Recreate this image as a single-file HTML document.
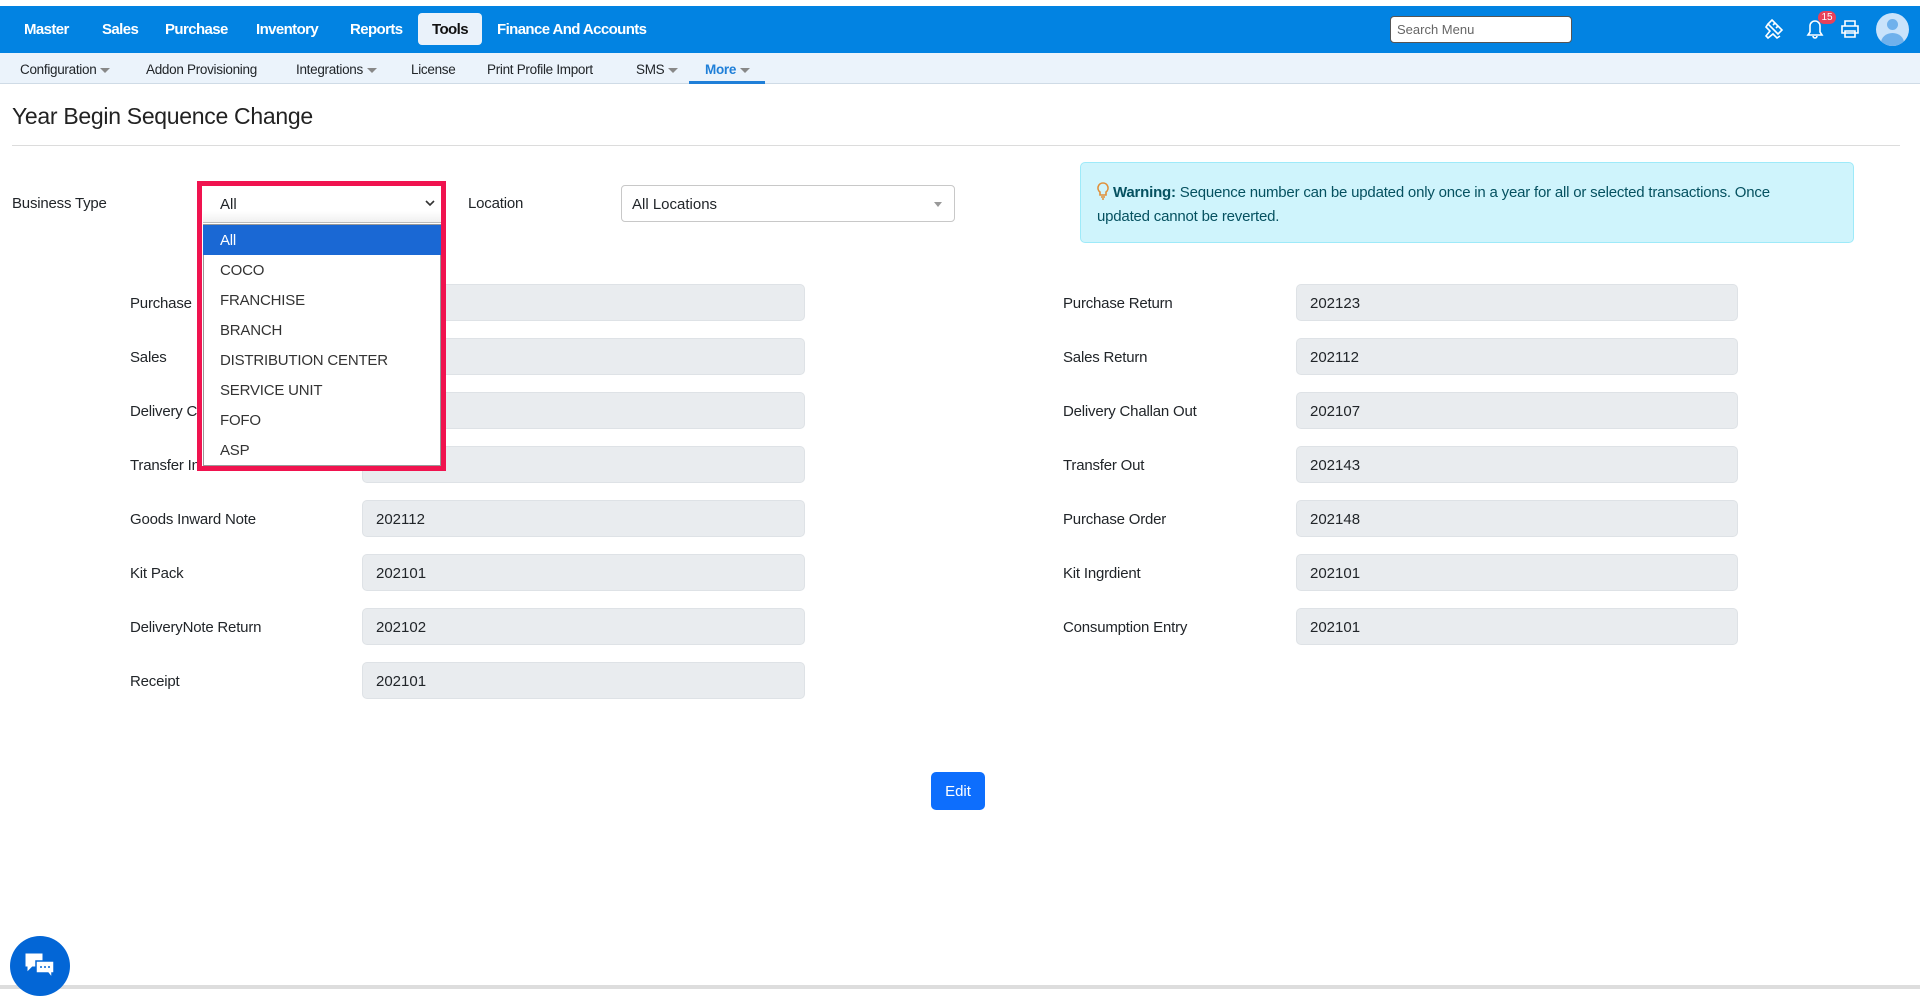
<!DOCTYPE html>
<html><head><meta charset="utf-8"><style>
*{box-sizing:border-box;margin:0;padding:0}
body{width:1920px;height:989px;position:relative;background:#fff;font-family:"Liberation Sans",sans-serif;color:#212529;overflow:hidden}
.a{position:absolute}
.top{left:0;top:6px;width:1920px;height:47px;background:#0283e2}
.nav{top:6px;height:47px;line-height:47px;color:#fff;font-weight:bold;font-size:15px;letter-spacing:-0.6px}
.tools{left:418px;top:13px;width:64px;height:32px;background:#eaf2fa;border-radius:4px;color:#111;line-height:34px;text-align:center;font-weight:bold;font-size:15px;letter-spacing:-0.6px}
.sub{left:0;top:53px;width:1920px;height:31px;background:#ebf3fb;border-bottom:1px solid #cfdbe6}
.si{top:54px;height:31px;line-height:31px;font-size:13.5px;color:#212529;letter-spacing:-0.3px}
.car{display:inline-block;width:0;height:0;border-left:5px solid transparent;border-right:5px solid transparent;border-top:5px solid #888;margin-left:4px;vertical-align:middle}
.lbl{font-size:15px;line-height:20px;letter-spacing:-0.2px}
.inp{background:#e9ecef;border:1px solid #dee2e6;border-radius:5px;height:37px;font-size:15px;line-height:37px;padding-left:13px}
.opt{left:203px;width:238px;height:30px;line-height:31px;padding-left:17px;font-size:15px;color:#333;letter-spacing:-0.2px}
</style></head><body>
<div class="a top"></div>
<div class="a nav" style="left:24px">Master</div>
<div class="a nav" style="left:102px">Sales</div>
<div class="a nav" style="left:165px">Purchase</div>
<div class="a nav" style="left:256px">Inventory</div>
<div class="a nav" style="left:350px">Reports</div>
<div class="a tools">Tools</div>
<div class="a nav" style="left:497px">Finance And Accounts</div>
<div class="a" style="left:1390px;top:16px;width:182px;height:27px;background:#fff;border:1px solid #555;border-radius:4px;font-size:13px;line-height:25px;padding-left:6px;color:#666">Search Menu</div>
<svg class="a" style="left:1760px;top:16px" width="26" height="26" viewBox="0 0 26 26" fill="none" stroke="#fff" stroke-width="1.6"><path d="M12 4l10 10-4 4-10-10z M8 8l-2 3 4 4-4 5 2 2 5-4 4 4 3-2"/><path d="M15 7l-2 2M18 10l-2 2"/></svg>
<svg class="a" style="left:1802px;top:14px" width="26" height="28" viewBox="0 0 26 28" fill="none" stroke="#fff" stroke-width="1.6"><path d="M6 21h14l-2-3v-6a5 5 0 0 0-10 0v6z M11 22a2 2 0 0 0 4 0"/></svg>
<div class="a" style="left:1818px;top:11px;width:18px;height:13px;background:#e8415a;border-radius:7px;color:#fff;font-size:10px;line-height:13px;text-align:center">15</div>
<svg class="a" style="left:1839px;top:18px" width="22" height="22" viewBox="0 0 22 22" fill="none" stroke="#fff" stroke-width="1.6"><path d="M6 8V3h10v5 M3 8h16v7H3z M6 13h10v6H6z"/></svg>
<div class="a" style="left:1876px;top:13px;width:33px;height:33px;border-radius:50%;background:#c9e3fb;overflow:hidden"><div class="a" style="left:11px;top:6px;width:11px;height:11px;border-radius:50%;background:#6fb1ec"></div><div class="a" style="left:5px;top:20px;width:23px;height:20px;border-radius:50%;background:#6fb1ec"></div></div>

<div class="a sub"></div>
<div class="a si" style="left:20px">Configuration<span class="car"></span></div>
<div class="a si" style="left:146px">Addon Provisioning</div>
<div class="a si" style="left:296px">Integrations<span class="car"></span></div>
<div class="a si" style="left:411px">License</div>
<div class="a si" style="left:487px">Print Profile Import</div>
<div class="a si" style="left:636px">SMS<span class="car"></span></div>
<div class="a si" style="left:705px;color:#1f7fd8;font-weight:bold">More<span class="car"></span></div>
<div class="a" style="left:689px;top:81px;width:76px;height:3px;background:#1f7fd8"></div>

<div class="a" style="left:12px;top:103px;font-size:23px;color:#222;letter-spacing:-0.3px">Year Begin Sequence Change</div>
<div class="a" style="left:12px;top:145px;width:1888px;height:1px;background:#dcdcdc"></div>

<div class="a lbl" style="left:12px;top:194px">Business Type</div>
<div class="a lbl" style="left:468px;top:194px">Location</div>
<div class="a" style="left:621px;top:185px;width:334px;height:37px;border:1px solid #c8c8c8;border-radius:4px;font-size:15px;line-height:37px;padding-left:10px">All Locations<span class="a" style="right:12px;top:16px;border-left:4px solid transparent;border-right:4px solid transparent;border-top:5px solid #999"></span></div>

<div class="a" style="left:1080px;top:162px;width:774px;height:81px;background:#cff4fc;border:1px solid #9eeaf9;border-radius:5px;color:#055160;font-size:15px;line-height:24px;padding:18px 0 0 16px;letter-spacing:-0.2px">
<svg width="12" height="18" viewBox="0 0 12 18" style="vertical-align:-3px" fill="none" stroke="#e0903a" stroke-width="1.6"><path d="M6 1a5 5 0 0 0-3 9v3h6v-3a5 5 0 0 0-3-9z M4 15h4 M5 17h2"/></svg> <b>Warning:</b> Sequence number can be updated only once in a year for all or selected transactions. Once<br>updated cannot be reverted.</div>

<div class="a lbl" style="left:130px;top:294px">Purchase</div>
<div class="a inp" style="left:362px;top:284px;width:443px"></div>
<div class="a lbl" style="left:130px;top:348px">Sales</div>
<div class="a inp" style="left:362px;top:338px;width:443px"></div>
<div class="a lbl" style="left:130px;top:402px">Delivery Challan In</div>
<div class="a inp" style="left:362px;top:392px;width:443px"></div>
<div class="a lbl" style="left:130px;top:456px">Transfer In</div>
<div class="a inp" style="left:362px;top:446px;width:443px"></div>
<div class="a lbl" style="left:130px;top:510px">Goods Inward Note</div>
<div class="a inp" style="left:362px;top:500px;width:443px">202112</div>
<div class="a lbl" style="left:130px;top:564px">Kit Pack</div>
<div class="a inp" style="left:362px;top:554px;width:443px">202101</div>
<div class="a lbl" style="left:130px;top:618px">DeliveryNote Return</div>
<div class="a inp" style="left:362px;top:608px;width:443px">202102</div>
<div class="a lbl" style="left:130px;top:672px">Receipt</div>
<div class="a inp" style="left:362px;top:662px;width:443px">202101</div>

<div class="a lbl" style="left:1063px;top:294px">Purchase Return</div>
<div class="a inp" style="left:1296px;top:284px;width:442px">202123</div>
<div class="a lbl" style="left:1063px;top:348px">Sales Return</div>
<div class="a inp" style="left:1296px;top:338px;width:442px">202112</div>
<div class="a lbl" style="left:1063px;top:402px">Delivery Challan Out</div>
<div class="a inp" style="left:1296px;top:392px;width:442px">202107</div>
<div class="a lbl" style="left:1063px;top:456px">Transfer Out</div>
<div class="a inp" style="left:1296px;top:446px;width:442px">202143</div>
<div class="a lbl" style="left:1063px;top:510px">Purchase Order</div>
<div class="a inp" style="left:1296px;top:500px;width:442px">202148</div>
<div class="a lbl" style="left:1063px;top:564px">Kit Ingrdient</div>
<div class="a inp" style="left:1296px;top:554px;width:442px">202101</div>
<div class="a lbl" style="left:1063px;top:618px">Consumption Entry</div>
<div class="a inp" style="left:1296px;top:608px;width:442px">202101</div>

<div class="a" style="left:197px;top:181px;width:249px;height:290px;border:5px solid #f0134f;background:#fff"></div>
<div class="a" style="left:203px;top:186px;width:238px;height:37px;background:linear-gradient(#fff 70%,#f0f0f0);border-bottom:1px solid #bbb;font-size:15px;line-height:38px;padding-left:17px">All<svg class="a" style="right:6px;top:14px" width="10" height="7" viewBox="0 0 10 7" fill="none" stroke="#333" stroke-width="1.6"><path d="M1 1l4 4 4-4"/></svg></div>
<div class="a" style="left:203px;top:224px;width:238px;height:242px;background:#fff;border:1px solid #999"></div>
<div class="a opt" style="top:225px;background:#1a68d4;color:#fff">All</div>
<div class="a opt" style="top:255px">COCO</div>
<div class="a opt" style="top:285px">FRANCHISE</div>
<div class="a opt" style="top:315px">BRANCH</div>
<div class="a opt" style="top:345px">DISTRIBUTION CENTER</div>
<div class="a opt" style="top:375px">SERVICE UNIT</div>
<div class="a opt" style="top:405px">FOFO</div>
<div class="a opt" style="top:435px">ASP</div>

<div class="a" style="left:931px;top:772px;width:54px;height:38px;background:#0d6efd;border-radius:5px;color:#fff;font-size:15px;line-height:40px;text-align:center">Edit</div>

<div class="a" style="left:0;top:985px;width:1920px;height:4px;background:#ddd"></div>
<div class="a" style="left:10px;top:936px;width:60px;height:60px;border-radius:50%;background:#0366d6"></div>
<svg class="a" style="left:24px;top:952px" width="34" height="30" viewBox="0 0 34 30"><path d="M2 2h16v12H8l-4 4v-4H2z" fill="#fff" stroke="#fff"/><path d="M12 9h18v12h-2v5l-4-5H12z" fill="#fff" stroke="#0366d6" stroke-width="1.5"/><circle cx="17" cy="15" r="1" fill="#0366d6"/><circle cx="21" cy="15" r="1" fill="#0366d6"/><circle cx="25" cy="15" r="1" fill="#0366d6"/></svg>
</body></html>
